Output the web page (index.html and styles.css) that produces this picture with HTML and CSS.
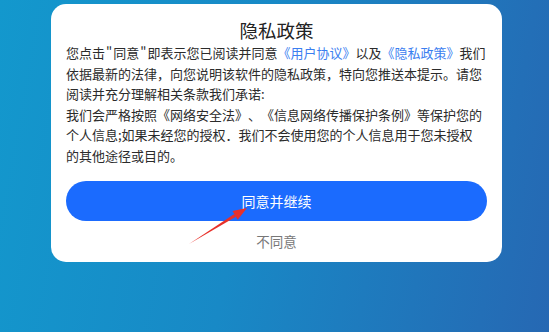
FILE: index.html
```html
<!DOCTYPE html>
<html lang="zh-CN">
<head>
<meta charset="utf-8">
<title>隐私政策</title>
<link rel="stylesheet" href="styles.css">
</head>
<body>
<div class="screen">
  <div class="dialog">
    <h1 class="title">隐私政策</h1>
    <p class="body-text">您点击<span class="q">"</span>同意<span class="q">"</span>即表示您已阅读并同意<a class="link">《用户协议》</a>以及<a class="link">《隐私政策》</a>我们<br>依据最新的法律，向您说明该软件的隐私政策，特向您推送本提示。请您<br>阅读并充分理解相关条款我们承诺:<br>我们会严格按照《网络安全法》、《信息网络传播保护条例》等保护您的<br>个人信息;如果未经您的授权．我们不会使用您的个人信息用于您未授权<br>的其他途径或目的。</p>
    <button class="btn-agree">同意并继续</button>
    <div class="btn-decline">不同意</div>
  </div>
  <svg class="arrow" width="549" height="332" viewBox="0 0 549 332">
    <polygon points="189,244 235.9,216.7 234.3,214.1" fill="#e8302a"/>
    <polygon points="247,208 237.7,219.7 232.5,211.1" fill="#e8302a"/>
  </svg>
</div>
</body>
</html>
```
FILE: styles.css
```css
html, body {
  margin: 0;
  padding: 0;
}
body {
  width: 549px;
  height: 332px;
  overflow: hidden;
  font-family: "Noto Sans CJK SC", "Noto Sans", sans-serif;
}
.screen {
  position: relative;
  width: 549px;
  height: 332px;
  background: linear-gradient(100deg, #1398cd 0%, #1889c6 45%, #2668b3 100%);
  padding-top: 4px;
  box-sizing: border-box;
}
.dialog {
  margin-left: 51px;
  width: 451px;
  box-sizing: border-box;
  background: #fff;
  border-radius: 15px;
  padding: 13px 15px 11px;
  display: flex;
  flex-direction: column;
}
.title {
  margin: 0;
  font-size: 18.5px;
  font-weight: 400;
  line-height: 26px;
  color: #222;
  text-align: center;
}
.body-text {
  margin: 0;
  font-size: 13px;
  line-height: 20.5px;
  color: #2b2b2b;
  white-space: nowrap;
  text-spacing-trim: space-all;
}
.q {
  display: inline-block;
  padding: 0 1px;
}
.link {
  color: #3b7ef0;
}
.btn-agree {
  margin-top: 15px;
  height: 40px;
  border: none;
  border-radius: 20px;
  background: #1b6bfe;
  color: #fff;
  font-family: inherit;
  font-size: 14px;
  padding: 0;
}
.btn-decline {
  margin-top: 10px;
  text-align: center;
  font-size: 13.5px;
  line-height: 20px;
  color: #777;
}
.arrow {
  position: absolute;
  left: 0;
  top: 0;
  pointer-events: none;
}
```
